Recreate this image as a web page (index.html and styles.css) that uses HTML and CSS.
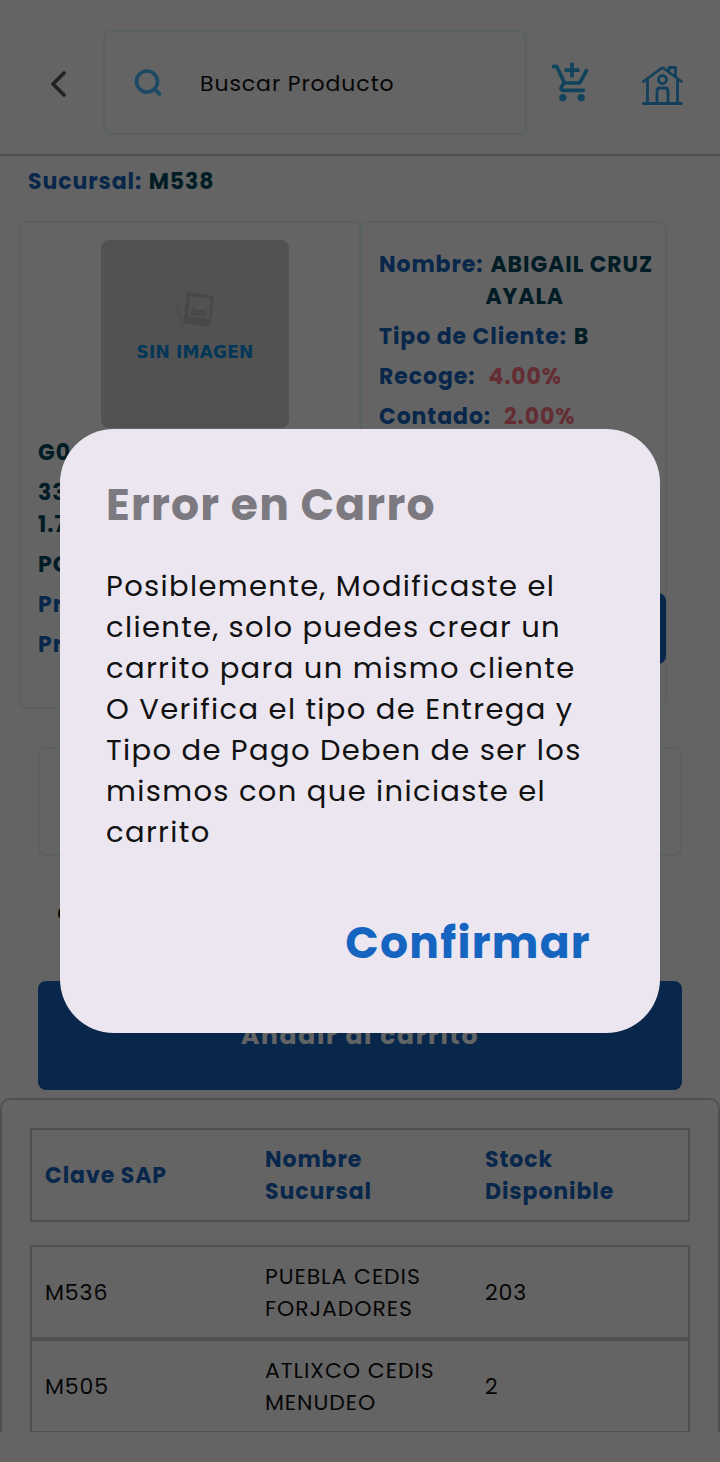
FILE: index.html
```html
<!DOCTYPE html>
<html lang="es">
<head>
<meta charset="utf-8">
<title>Error en Carro</title>
<link rel="stylesheet" href="styles.css">
</head>
<body>
<div class="screen">
  <header class="topbar">
    <svg class="back" width="24" height="32" viewBox="0 0 24 32"><path d="M18 5L7 16l11 11"/></svg>
    <div class="search">
      <svg width="32" height="32" viewBox="0 0 32 32"><circle cx="15" cy="14.500" r="10.500"/><path d="M22.500 22l5 5"/></svg>
      <span>Buscar Producto</span>
    </div>
    <svg class="cart" width="44" height="44" viewBox="0 0 24 24"><path d="M11 9h2V6h3V4h-3V1h-2v3H8v2h3v3zm-4 9c-1.100 0-1.990.9-1.990 2S5.900 22 7 22s2-.9 2-2-.9-2-2-2zm10 0c-1.100 0-1.990.9-1.990 2s.890 2 1.990 2 2-.9 2-2-.9-2-2-2zm-9.830-3.250l.030-.120.900-1.630h7.450c.750 0 1.410-.410 1.750-1.030l3.860-7.010L19.420 4h-.010l-1.100 2-2.760 5H8.530l-.130-.270L6.160 6l-.950-2-.940-2H1v2h2l3.600 7.590-1.350 2.450c-.160.280-.250.610-.250.960 0 1.100.9 2 2 2h12v-2H7.420c-.130 0-.250-.110-.250-.250z"/></svg>
    <svg class="home" width="42" height="42" viewBox="0 0 42 42"><path d="M2.500 38.500h38M6.500 37V15.500M36.500 37V15.500M2.500 16.500L20 3.500q1.500-1 3 0l17.500 13M28 6V2.500h6.500V11M16 37V26q0-3 3-3h5q3 0 3 3v11"/><circle cx="21.500" cy="14.500" r="4"/></svg>
  </header>
  <p class="branch">Sucursal: <b>M538</b></p>
  <section class="info">
    <div class="card product">
      <div class="noimg">
        <svg width="44" height="42" viewBox="0 0 44 42"><path class="rear" d="M1 17l5-2 5 23-4-1z"/><path class="frame" fill-rule="evenodd" d="M14 2l27 4-4 31-27-4zM17 6l-2 20 21 3 2-20z"/><path class="frame" d="M17 22l4-5 4 4 3-2 3 2 3-5-1 11-16-2z"/></svg>
        <span>SIN IMAGEN</span>
      </div>
      <p class="dark">G0</p>
      <p class="dark">33<br>1.7</p>
      <p class="dark">PO</p>
      <p>Pr</p>
      <p>Pr</p>
    </div>
    <div class="card client">
      <div class="pair"><span>Nombre:</span><b>ABIGAIL CRUZ<br><span class="surname">AYALA</span></b></div>
      <div class="pair"><span>Tipo de Cliente:</span><b>B</b></div>
      <div class="pair wide"><span>Recoge:</span><em>4.00%</em></div>
      <div class="pair wide"><span>Contado:</span><em>2.00%</em></div>
      <div class="mini"></div>
    </div>
  </section>
  <div class="field"></div>
  <p class="qty">C</p>
  <div class="add"><span>Añadir al carrito</span></div>
  <section class="stock">
    <div class="row head"><span>Clave SAP</span><span>Nombre<br>Sucursal</span><span>Stock<br>Disponible</span></div>
    <div class="row"><span>M536</span><span>PUEBLA CEDIS<br>FORJADORES</span><span>203</span></div>
    <div class="row"><span>M505</span><span>ATLIXCO CEDIS<br>MENUDEO</span><span>2</span></div>
  </section>
</div>
<div class="scrim">
  <div class="dialog">
    <h1>Error en Carro</h1>
    <p class="msg">Posiblemente, Modificaste el<br>cliente, solo puedes crear un<br>carrito para un mismo cliente<br>O Verifica el tipo de Entrega y<br>Tipo de Pago Deben de ser los<br>mismos con que iniciaste el<br>carrito</p>
    <div class="confirm">Confirmar</div>
  </div>
</div>
</body>
</html>
```
FILE: styles.css
```css
* { box-sizing: border-box; }
body { margin: 0; background: #fff; font-family: Poppins, Inter, sans-serif; color: #111; }
p, h1 { margin: 0; }
b { font-weight: inherit; }
.screen { width: 720px; height: 1462px; overflow: hidden; display: flex; flex-direction: column; font-size: 22px; line-height: 32px; letter-spacing: .92px; }
.topbar { height: 156px; flex: none; border-bottom: 2px solid #ccc; padding: 30px 37px 0 46px; display: flex; align-items: flex-start; }
svg { fill: none; stroke-linecap: round; stroke-linejoin: round; flex: none; }
.back { margin: 38px 33px 0 0; stroke: #555; stroke-width: 3.700; }
.search { width: 424px; height: 105px; border: 2px solid #e4f6f6; border-radius: 7px; padding: 0 0 0 27px; display: flex; align-items: center; gap: 36px; }
.search span { padding-top: 2px; }
.search svg { stroke: #48bcff; stroke-width: 3.700; }
.cart { margin: 31px 0 0 23px; fill: #28a8e8; }
.home { margin: 35px 0 0 auto; stroke: #30a4ea; stroke-width: 2.800; }
.branch { padding: 10px 28px 0; height: 65px; flex: none; font-weight: 700; color: #1565c0; }
.branch b, .dark, .pair b { color: #004b60; }
.branch b { margin-left: 1px; }
.info { display: flex; margin: 0 0 0 19px; flex: none; }
.card { border: 2px solid #e4f6f6; border-radius: 7px; height: 488px; font-weight: 700; color: #1565c0; }
.product { width: 342px; padding: 17px; }
.product p { margin-bottom: 8px; }
.noimg { width: 188px; height: 188px; margin: 0 auto 9px 63px; background: #d0d0d0; border-radius: 8px; display: flex; flex-direction: column; align-items: center; padding-top: 50px; font: 700 17px/24px "DejaVu Sans", sans-serif; letter-spacing: .200px; color: #008ce0; gap: 8px; }
.noimg .frame { fill: #b8b8b8; }
.noimg .rear { fill: #c6c6c6; }
.client { width: 307px; padding: 26px 0 0 17px; margin-left: -1px; display: flex; flex-direction: column; gap: 8px; }
.pair { display: flex; gap: 7px; white-space: nowrap; }
.surname { margin-left: -5px; }
.pair.wide { gap: 13px; }
.pair em { font-style: normal; color: #ff7384; }
.mini { height: 71px; margin-top: 152px; margin-right: -1px; background: #1565c0; border-radius: 8px; }
.field { height: 109px; margin: 38px 38px 0; border: 2px solid #e9f6f6; border-radius: 7px; flex: none; }
.qty { margin: 42px 0 0 57px; }
.add { margin: 51px 38px 8px; height: 109px; flex: none; border-radius: 8px; background: #1565c0; color: #fff; font-size: 25px; font-weight: 700; display: flex; align-items: center; justify-content: center; padding-top: 1px; letter-spacing: 1.700px; }
.stock { height: 334px; flex: none; overflow: hidden; border: 2px solid #ccc; border-bottom: 0; border-radius: 10px 10px 0 0; padding: 28px; }
.row { height: 94px; border: 2px solid #ccc; display: grid; grid-template-columns: 220px 220px 1fr; align-items: center; padding: 2px 0 0 13px; }
.head { color: #1565c0; font-weight: 700; margin-bottom: 23px; }
.scrim { position: absolute; inset: 0; height: 1462px; background: rgba(0,0,0,.608); display: flex; align-items: center; justify-content: center; }
.dialog { width: 600px; height: 604px; border-radius: 54px; background: #ebe6f0; padding: 46px 46px; }
h1 { font-size: 44px; line-height: 60px; color: #7c7a80; font-weight: 700; white-space: nowrap; letter-spacing: 1.200px; }
.msg { margin-top: 31px; font-size: 29px; line-height: 41px; color: #111; white-space: nowrap; letter-spacing: 1.350px; }
.confirm { margin: 60px 23px 0; text-align: right; font-size: 44px; line-height: 60px; font-weight: 700; color: #1565c0; letter-spacing: 1.300px; }
```
